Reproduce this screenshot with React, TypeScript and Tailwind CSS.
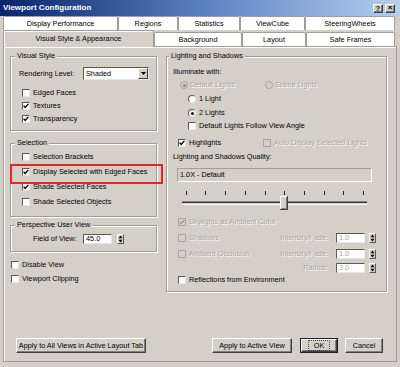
import React from "react";

function Check({ checked = false, disabled = false }: { checked?: boolean; disabled?: boolean }) {
  return (
    <span
      className={
        disabled
          ? "flex h-[8px] w-[8px] shrink-0 items-center justify-center border border-[#a7a49e] bg-[#d4d0c8]"
          : "flex h-[8px] w-[8px] shrink-0 items-center justify-center border border-t-[#5a5852] border-l-[#5a5852] border-b-[#e8e6e2] border-r-[#e8e6e2] bg-white"
      }
    >
      {checked && (
        <svg width="6" height="6" viewBox="0 0 6 6">
          <path d="M0.6 2.6 L2.2 4.4 L5.4 0.9" stroke={disabled ? "#9a978f" : "#000"} strokeWidth="1.4" fill="none" />
        </svg>
      )}
    </span>
  );
}

function Radio({ on = false, disabled = false }: { on?: boolean; disabled?: boolean }) {
  return (
    <span
      className={
        disabled
          ? "flex h-[8px] w-[8px] shrink-0 items-center justify-center rounded-full border border-[#a7a49e] bg-[#d4d0c8]"
          : "flex h-[8px] w-[8px] shrink-0 items-center justify-center rounded-full border border-t-[#5a5852] border-l-[#5a5852] border-b-[#e8e6e2] border-r-[#e8e6e2] bg-white"
      }
    >
      {on && <span className={disabled ? "h-[3px] w-[3px] rounded-full bg-[#8e8b85]" : "h-[3px] w-[3px] rounded-full bg-black"} />}
    </span>
  );
}

function Spin({ h }: { h: string }) {
  return (
    <span
      className={
        "flex w-[7px] items-center justify-center border border-t-white border-l-white border-b-[#5a5852] border-r-[#5a5852] bg-[#d4d0c8] " + h
      }
    >
      <svg width="5" height="8" viewBox="0 0 5 8">
        <path d="M2.5 0.6 L4.5 3.2 L0.5 3.2Z M0.5 4.8 L4.5 4.8 L2.5 7.4Z" fill="#000" />
      </svg>
    </span>
  );
}

function Btn({ children, className }: { children: React.ReactNode; className: string }) {
  return (
    <div
      className={
        "flex items-center justify-center border border-t-white border-l-white border-b-[#404040] border-r-[#404040] bg-[#d4d0c8] shadow-[inset_-1px_-1px_0_#808080] " +
        className
      }
    >
      {children}
    </div>
  );
}

function Group({
  label,
  className,
  labelClass,
  children,
}: {
  label: string;
  className: string;
  labelClass: string;
  children: React.ReactNode;
}) {
  return (
    <div className={"relative border border-[#a09d98] shadow-[inset_1px_1px_0_#fff,1px_1px_0_#fff] " + className}>
      <span className={"absolute top-[-6px] bg-[#d4d0c8] px-[2px] leading-[10px] " + labelClass}>{label}</span>
      {children}
    </div>
  );
}

function CheckRow({
  label,
  checked = false,
  disabled = false,
  className,
}: {
  label: string;
  checked?: boolean;
  disabled?: boolean;
  className: string;
}) {
  return (
    <div className={"flex items-center gap-[3px] " + className}>
      <Check checked={checked} disabled={disabled} />
      <span className={disabled ? "text-[#a7a49e] [text-shadow:1px_1px_0_#fff]" : ""}>{label}</span>
    </div>
  );
}

const dis = "text-[#a7a49e] [text-shadow:1px_1px_0_#fff]";

function NumField({ value, disabled = false, className }: { value: string; disabled?: boolean; className: string }) {
  return (
    <span
      className={
        "flex items-center border border-t-[#5a5852] border-l-[#5a5852] border-b-[#e8e6e2] border-r-[#e8e6e2] bg-white pl-[2px] " +
        className
      }
    >
      <span className={disabled ? "text-[#a7a49e]" : "text-black"}>{value}</span>
    </span>
  );
}

function Slider() {
  const ticks = Array.from({ length: 10 }, (_, i) => Math.round(3.7 + i * 19.72));
  return (
    <svg width="185" height="22" viewBox="0 0 185 22" className="ml-[15px] mt-[7px] block">
      {ticks.map((x) => (
        <rect key={x} x={x} y={2} width={1} height={4} fill="#222" />
      ))}
      <rect x={0} y={12} width={185} height={1} fill="#808080" />
      <rect x={0} y={13} width={185} height={1} fill="#404040" />
      <rect x={0} y={14} width={185} height={1} fill="#d4d0c8" />
      <rect x={0} y={15} width={185} height={1} fill="#ffffff" />
      <rect x={98} y={7} width={8} height={14} fill="#404040" />
      <rect x={98} y={7} width={7} height={13} fill="#ffffff" />
      <rect x={99} y={8} width={6} height={12} fill="#808080" />
      <rect x={99} y={8} width={5} height={11} fill="#d4d0c8" />
    </svg>
  );
}

function RightField({ label, value }: { label: string; value: string }) {
  return (
    <div className="flex items-center">
      <span className={"w-[60px] text-right " + dis}>{label}</span>
      <NumField value={value} disabled className="ml-[8px] h-[10px] w-[29px]" />
      <span className="ml-[4px]">
        <Spin h="h-[10px]" />
      </span>
    </div>
  );
}

export default function App() {
  return (
    <div className="relative h-[367px] w-[400px] overflow-hidden bg-[#d4d0c8] font-['Liberation_Sans',Arial,sans-serif] text-[7.3px] leading-none text-black">
      {/* Title bar */}
      <div className="flex h-[16px] items-center justify-between bg-linear-to-r from-[#0a246a] via-[#5a7fbf] to-[#b4d0ef] pl-[3px] pr-[5px]">
        <span className="text-[8px] font-bold text-white">Viewport Configuration</span>
        <div className="flex gap-[2px]">
          <Btn className="h-[9px] w-[10px] text-[7px] font-bold">?</Btn>
          <Btn className="h-[9px] w-[10px] text-[8px] font-bold">×</Btn>
        </div>
      </div>

      {/* Tabs */}
      <div className="flex h-[14px] pl-[3px]">
        {[
          ["Display Performance", "w-[115px]"],
          ["Regions", "w-[60px]"],
          ["Statistics", "w-[62px]"],
          ["ViewCube", "w-[65px]"],
          ["SteeringWheels", "w-[90px]"],
        ].map(([t, w]) => (
          <div
            key={t}
            className={"flex h-[14px] items-center justify-center rounded-t-[2px] border border-b-0 border-[#a09d98] bg-white " + w}
          >
            {t}
          </div>
        ))}
      </div>
      <div className="flex h-[16px] items-end pl-[3px]">
        <div className="relative z-10 -mb-px flex h-[17px] w-[151px] items-center justify-center rounded-t-[2px] border border-b-0 border-[#a09d98] bg-[#d4d0c8] shadow-[inset_1px_1px_0_#fff]">
          Visual Style &amp; Appearance
        </div>
        {[
          ["Background", "w-[88px]"],
          ["Layout", "w-[64px]"],
          ["Safe Frames", "w-[89px]"],
        ].map(([t, w]) => (
          <div
            key={t}
            className={"flex h-[14px] items-center justify-center rounded-t-[2px] border border-b-0 border-[#a09d98] bg-white " + w}
          >
            {t}
          </div>
        ))}
      </div>

      {/* Panel */}
      <div className="mx-[3px] flex h-[316px] border border-[#a09d98] pl-[6px] pt-[9px] shadow-[inset_1px_1px_0_#fff]">
        {/* Left column */}
        <div className="flex w-[147px] flex-col">
          <Group label="Visual Style" className="h-[75px] w-[147px]" labelClass="left-[4px]">
            <div className="ml-[8px] mt-[10px] flex h-[13px] items-center">
              <span className="w-[64px]">Rendering Level:</span>
              <span className="flex h-[13px] w-[66px] items-center border border-t-[#5a5852] border-l-[#5a5852] border-b-[#e8e6e2] border-r-[#e8e6e2] bg-white pl-[2px]">
                <span className="flex-1">Shaded</span>
                <span className="flex h-[11px] w-[10px] items-center justify-center border border-t-white border-l-white border-b-[#404040] border-r-[#404040] bg-[#d4d0c8]">
                  <svg width="5" height="3" viewBox="0 0 5 3">
                    <path d="M0 0 L5 0 L2.5 3Z" fill="#000" />
                  </svg>
                </span>
              </span>
            </div>
            <div className="mt-[6px]">
              <CheckRow label="Edged Faces" className="ml-[11px] h-[13px]" />
              <CheckRow label="Textures" checked className="ml-[11px] h-[13px]" />
              <CheckRow label="Transparency" checked className="ml-[11px] h-[13px]" />
            </div>
          </Group>

          <Group label="Selection" className="mt-[12px] h-[74px] w-[147px]" labelClass="left-[4px]">
            <div className="mt-[5px]">
              <CheckRow label="Selection Brackets" className="ml-[11px] h-[15px]" />
              <CheckRow label="Display Selected with Edged Faces" checked className="ml-[11px] h-[15px]" />
              <CheckRow label="Shade Selected Faces" checked className="ml-[11px] h-[15px]" />
              <CheckRow label="Shade Selected Objects" className="ml-[11px] h-[15px]" />
            </div>
            <div className="absolute left-[-1px] top-[20px] h-[20px] w-[153px] border-2 border-[#e3262b]" />
          </Group>

          <Group label="Perspective User View" className="mt-[8px] h-[27px] w-[147px]" labelClass="left-[4px]">
            <div className="ml-[22px] mt-[8px] flex h-[10px] items-center">
              <span className="w-[50px]">Field of View:</span>
              <NumField value="45.0" className="h-[10px] w-[29px]" />
              <span className="ml-[5px]">
                <Spin h="h-[10px]" />
              </span>
            </div>
          </Group>

          <div className="mt-[6px] pl-[1px]">
            <CheckRow label="Disable View" className="h-[14px]" />
            <CheckRow label="Viewport Clipping" className="h-[14px]" />
          </div>

          <Btn className="ml-[6px] mt-[52px] h-[15px] w-[130px]">Apply to All Views in Active Layout Tab</Btn>
        </div>

        {/* Right column */}
        <div className="ml-[9px] flex w-[221px] flex-col">
          <Group label="Lighting and Shadows" className="h-[236px] w-[221px]" labelClass="left-[2px]">
            <div className="ml-[6px] mt-[9px] flex h-[12px] items-center">Illuminate with:</div>
            <div className="ml-[13px] flex h-[14px] items-center">
              <div className="flex w-[85px] items-center gap-[2px]">
                <Radio on disabled />
                <span className={dis}>Default Lights</span>
              </div>
              <div className="flex items-center gap-[2px]">
                <Radio disabled />
                <span className={dis}>Scene Lights</span>
              </div>
            </div>
            <div className="ml-[21px] flex h-[14px] items-center gap-[3px]">
              <Radio />
              <span>1 Light</span>
            </div>
            <div className="ml-[21px] flex h-[14px] items-center gap-[3px]">
              <Radio on />
              <span>2 Lights</span>
            </div>
            <CheckRow label="Default Lights Follow View Angle" className="ml-[21px] h-[12px]" />
            <div className="ml-[11px] mt-[4px] flex h-[14px] items-center">
              <div className="w-[85px]">
                <CheckRow label="Highlights" checked className="" />
              </div>
              <CheckRow label="Auto Display Selected Lights" disabled className="" />
            </div>
            <div className="ml-[6px] flex h-[14px] items-center">Lighting and Shadows Quality:</div>
            <div className="ml-[10px] mt-[4px] flex h-[14px] w-[195px] items-center border border-t-[#a09d98] border-l-[#a09d98] border-b-white border-r-white pl-[2px]">
              1.0X - Default
            </div>
            <Slider />
            <CheckRow label="Skylights as Ambient Color" checked disabled className="ml-[11px] mt-[4px] h-[14px]" />
            <div className="ml-[11px] mr-[10px] mt-[3px] flex h-[12px] items-center">
              <div className="flex-1">
                <CheckRow label="Shadows" disabled className="" />
              </div>
              <RightField label="Intensity/Fade:" value="1.0" />
            </div>
            <div className="ml-[11px] mr-[10px] mt-[4px] flex h-[12px] items-center">
              <div className="flex-1">
                <CheckRow label="Ambient Occlusion" disabled className="" />
              </div>
              <RightField label="Intensity/Fade:" value="1.0" />
            </div>
            <div className="ml-[11px] mr-[10px] mt-[2px] flex h-[12px] items-center">
              <div className="flex-1" />
              <RightField label="Radius:" value="3.0" />
            </div>
            <CheckRow label="Reflections from Environment" className="ml-[11px] h-[12px]" />
          </Group>

          <div className="ml-[46px] mt-[46px] flex">
            <Btn className="h-[15px] w-[80px]">Apply to Active View</Btn>
            <div className="ml-[8px] h-[15px] w-[38px] border border-[#202020]">
              <Btn className="h-[13px] w-[36px]">
                <span className="border border-dotted border-[#404040] px-[5px] py-[1px]">OK</span>
              </Btn>
            </div>
            <Btn className="ml-[7px] h-[15px] w-[38px]">Cancel</Btn>
          </div>
        </div>
      </div>
    </div>
  );
}
